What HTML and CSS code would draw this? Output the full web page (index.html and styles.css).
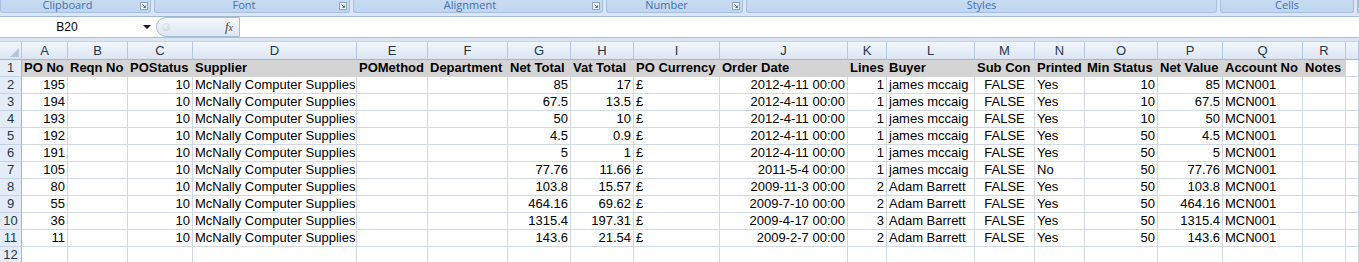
FILE: index.html
```html
<!DOCTYPE html>
<html lang="en">
<head>
    <meta charset="UTF-8">
    <meta name="viewport" content="width=device-width, initial-scale=1.0">
    <title>Purchase Orders - Microsoft Excel</title>
    <link rel="stylesheet" href="styles.css">
</head>
<body>
    <div class="toolbar">
        <!-- ribbon group captions -->
        <div class="ribbon">
            <div class="group g-clipboard">
                <span class="group-label">Clipboard</span>
                <svg class="launcher" width="8" height="8" viewBox="0 0 8 8"><rect x="0.5" y="0.5" width="7" height="7" fill="#eef3fa" stroke="#8ea3c0"/><path d="M2.5 2.5 L5.5 5.5 M5.5 3.5 V5.5 H3.5" stroke="#5b6f8c" fill="none"/></svg>
            </div>
            <div class="group g-font">
                <span class="group-label">Font</span>
                <svg class="launcher" width="8" height="8" viewBox="0 0 8 8"><rect x="0.5" y="0.5" width="7" height="7" fill="#eef3fa" stroke="#8ea3c0"/><path d="M2.5 2.5 L5.5 5.5 M5.5 3.5 V5.5 H3.5" stroke="#5b6f8c" fill="none"/></svg>
            </div>
            <div class="group g-alignment">
                <span class="group-label">Alignment</span>
                <svg class="launcher" width="8" height="8" viewBox="0 0 8 8"><rect x="0.5" y="0.5" width="7" height="7" fill="#eef3fa" stroke="#8ea3c0"/><path d="M2.5 2.5 L5.5 5.5 M5.5 3.5 V5.5 H3.5" stroke="#5b6f8c" fill="none"/></svg>
            </div>
            <div class="group g-number">
                <span class="group-label">Number</span>
                <svg class="launcher" width="8" height="8" viewBox="0 0 8 8"><rect x="0.5" y="0.5" width="7" height="7" fill="#eef3fa" stroke="#8ea3c0"/><path d="M2.5 2.5 L5.5 5.5 M5.5 3.5 V5.5 H3.5" stroke="#5b6f8c" fill="none"/></svg>
            </div>
            <div class="group g-styles">
                <span class="group-label">Styles</span>
            </div>
            <div class="group g-cells">
                <span class="group-label">Cells</span>
            </div>
            <div class="group g-editing"></div>
        </div>

        <!-- name box + formula bar -->
        <div class="formula-bar">
            <div class="name-box">
                <span class="cell-ref">B20</span>
                <span class="name-drop"></span>
            </div>
            <div class="fx-button">
                <span class="fx-knob"></span>
                <span class="fx-label">f<span class="fx-sub">x</span></span>
            </div>
            <div class="formula-input"></div>
        </div>
    </div>

    <div class="sheet">
        <div class="row col-heads">
            <div class="corner"><svg width="9" height="9" viewBox="0 0 9 9"><path d="M9 0 V9 H0 Z" fill="#b4c6dd"/></svg></div>
            <div class="ch">A</div><div class="ch">B</div><div class="ch">C</div><div class="ch">D</div>
            <div class="ch">E</div><div class="ch">F</div><div class="ch">G</div><div class="ch">H</div>
            <div class="ch">I</div><div class="ch">J</div><div class="ch">K</div><div class="ch">L</div>
            <div class="ch">M</div><div class="ch">N</div><div class="ch">O</div><div class="ch">P</div>
            <div class="ch">Q</div><div class="ch">R</div><div class="ch"></div>
        </div>

        <div class="row title-row">
            <div class="rh">1</div>
            <div class="c hd">PO No</div><div class="c hd">Reqn No</div><div class="c hd">POStatus</div><div class="c hd">Supplier</div>
            <div class="c hd">POMethod</div><div class="c hd">Department</div><div class="c hd">Net Total</div><div class="c hd">Vat Total</div>
            <div class="c hd">PO Currency</div><div class="c hd">Order Date</div><div class="c hd">Lines</div><div class="c hd">Buyer</div>
            <div class="c hd">Sub Con</div><div class="c hd">Printed</div><div class="c hd">Min Status</div><div class="c hd">Net Value</div>
            <div class="c hd">Account No</div><div class="c hd">Notes</div><div class="c"></div>
        </div>

        <div class="row">
            <div class="rh">2</div>
            <div class="c num">195</div><div class="c"></div><div class="c num">10</div><div class="c">McNally Computer Supplies</div>
            <div class="c"></div><div class="c"></div><div class="c num">85</div><div class="c num">17</div>
            <div class="c">£</div><div class="c num">2012-4-11 00:00</div><div class="c num">1</div><div class="c">james mccaig</div>
            <div class="c bool">FALSE</div><div class="c">Yes</div><div class="c num">10</div><div class="c num">85</div>
            <div class="c">MCN001</div><div class="c"></div><div class="c"></div>
        </div>
        <div class="row">
            <div class="rh">3</div>
            <div class="c num">194</div><div class="c"></div><div class="c num">10</div><div class="c">McNally Computer Supplies</div>
            <div class="c"></div><div class="c"></div><div class="c num">67.5</div><div class="c num">13.5</div>
            <div class="c">£</div><div class="c num">2012-4-11 00:00</div><div class="c num">1</div><div class="c">james mccaig</div>
            <div class="c bool">FALSE</div><div class="c">Yes</div><div class="c num">10</div><div class="c num">67.5</div>
            <div class="c">MCN001</div><div class="c"></div><div class="c"></div>
        </div>
        <div class="row">
            <div class="rh">4</div>
            <div class="c num">193</div><div class="c"></div><div class="c num">10</div><div class="c">McNally Computer Supplies</div>
            <div class="c"></div><div class="c"></div><div class="c num">50</div><div class="c num">10</div>
            <div class="c">£</div><div class="c num">2012-4-11 00:00</div><div class="c num">1</div><div class="c">james mccaig</div>
            <div class="c bool">FALSE</div><div class="c">Yes</div><div class="c num">10</div><div class="c num">50</div>
            <div class="c">MCN001</div><div class="c"></div><div class="c"></div>
        </div>
        <div class="row">
            <div class="rh">5</div>
            <div class="c num">192</div><div class="c"></div><div class="c num">10</div><div class="c">McNally Computer Supplies</div>
            <div class="c"></div><div class="c"></div><div class="c num">4.5</div><div class="c num">0.9</div>
            <div class="c">£</div><div class="c num">2012-4-11 00:00</div><div class="c num">1</div><div class="c">james mccaig</div>
            <div class="c bool">FALSE</div><div class="c">Yes</div><div class="c num">50</div><div class="c num">4.5</div>
            <div class="c">MCN001</div><div class="c"></div><div class="c"></div>
        </div>
        <div class="row">
            <div class="rh">6</div>
            <div class="c num">191</div><div class="c"></div><div class="c num">10</div><div class="c">McNally Computer Supplies</div>
            <div class="c"></div><div class="c"></div><div class="c num">5</div><div class="c num">1</div>
            <div class="c">£</div><div class="c num">2012-4-11 00:00</div><div class="c num">1</div><div class="c">james mccaig</div>
            <div class="c bool">FALSE</div><div class="c">Yes</div><div class="c num">50</div><div class="c num">5</div>
            <div class="c">MCN001</div><div class="c"></div><div class="c"></div>
        </div>
        <div class="row">
            <div class="rh">7</div>
            <div class="c num">105</div><div class="c"></div><div class="c num">10</div><div class="c">McNally Computer Supplies</div>
            <div class="c"></div><div class="c"></div><div class="c num">77.76</div><div class="c num">11.66</div>
            <div class="c">£</div><div class="c num">2011-5-4 00:00</div><div class="c num">1</div><div class="c">james mccaig</div>
            <div class="c bool">FALSE</div><div class="c">No</div><div class="c num">50</div><div class="c num">77.76</div>
            <div class="c">MCN001</div><div class="c"></div><div class="c"></div>
        </div>
        <div class="row">
            <div class="rh">8</div>
            <div class="c num">80</div><div class="c"></div><div class="c num">10</div><div class="c">McNally Computer Supplies</div>
            <div class="c"></div><div class="c"></div><div class="c num">103.8</div><div class="c num">15.57</div>
            <div class="c">£</div><div class="c num">2009-11-3 00:00</div><div class="c num">2</div><div class="c">Adam Barrett</div>
            <div class="c bool">FALSE</div><div class="c">Yes</div><div class="c num">50</div><div class="c num">103.8</div>
            <div class="c">MCN001</div><div class="c"></div><div class="c"></div>
        </div>
        <div class="row">
            <div class="rh">9</div>
            <div class="c num">55</div><div class="c"></div><div class="c num">10</div><div class="c">McNally Computer Supplies</div>
            <div class="c"></div><div class="c"></div><div class="c num">464.16</div><div class="c num">69.62</div>
            <div class="c">£</div><div class="c num">2009-7-10 00:00</div><div class="c num">2</div><div class="c">Adam Barrett</div>
            <div class="c bool">FALSE</div><div class="c">Yes</div><div class="c num">50</div><div class="c num">464.16</div>
            <div class="c">MCN001</div><div class="c"></div><div class="c"></div>
        </div>
        <div class="row">
            <div class="rh">10</div>
            <div class="c num">36</div><div class="c"></div><div class="c num">10</div><div class="c">McNally Computer Supplies</div>
            <div class="c"></div><div class="c"></div><div class="c num">1315.4</div><div class="c num">197.31</div>
            <div class="c">£</div><div class="c num">2009-4-17 00:00</div><div class="c num">3</div><div class="c">Adam Barrett</div>
            <div class="c bool">FALSE</div><div class="c">Yes</div><div class="c num">50</div><div class="c num">1315.4</div>
            <div class="c">MCN001</div><div class="c"></div><div class="c"></div>
        </div>
        <div class="row">
            <div class="rh">11</div>
            <div class="c num">11</div><div class="c"></div><div class="c num">10</div><div class="c">McNally Computer Supplies</div>
            <div class="c"></div><div class="c"></div><div class="c num">143.6</div><div class="c num">21.54</div>
            <div class="c">£</div><div class="c num">2009-2-7 00:00</div><div class="c num">2</div><div class="c">Adam Barrett</div>
            <div class="c bool">FALSE</div><div class="c">Yes</div><div class="c num">50</div><div class="c num">143.6</div>
            <div class="c">MCN001</div><div class="c"></div><div class="c"></div>
        </div>
        <div class="row">
            <div class="rh">12</div>
            <div class="c"></div><div class="c"></div><div class="c"></div><div class="c"></div>
            <div class="c"></div><div class="c"></div><div class="c"></div><div class="c"></div>
            <div class="c"></div><div class="c"></div><div class="c"></div><div class="c"></div>
            <div class="c"></div><div class="c"></div><div class="c"></div><div class="c"></div>
            <div class="c"></div><div class="c"></div><div class="c"></div>
        </div>
    </div>
</body>
</html>
```

FILE: styles.css
```css
body {
    margin: 0;
    width: 1359px;
    overflow: hidden;
    background: #fff;
    font-family: "Liberation Sans", Arial, sans-serif;
}

/* ---------- ribbon + formula bar ---------- */
.toolbar {
    background: #dbe6f4;
    padding-bottom: 3px;
}

.ribbon {
    display: flex;
    gap: 3px;
    height: 13px;
}

.group {
    display: flex;
    align-items: flex-start;
    box-sizing: border-box;
    height: 13px;
    background: linear-gradient(#c7dbf2, #c0d5ef);
    border: 1px solid #a6bfe0;
    border-top: none;
    border-radius: 0 0 3px 3px;
}

.g-clipboard { width: 151px; }
.g-font      { width: 196px; }
.g-alignment { width: 250px; }
.g-number    { width: 137px; }
.g-styles    { width: 471px; }
.g-cells     { width: 134px; }
.g-editing   { flex: 1; }

.group-label {
    flex: 1;
    text-align: center;
    font-family: "Open Sans", "Noto Sans", sans-serif;
    font-size: 11px;
    line-height: 10px;
    color: #4470ad;
}

.launcher {
    margin: 2px 2px 0 6px;
}

.formula-bar {
    display: flex;
    box-sizing: border-box;
    height: 22px;
    margin-top: 3px;
    background: #fff;
    border-top: 1px solid #9fb6d7;
    border-bottom: 1px solid #a9bedb;
}

.name-box {
    display: flex;
    align-items: center;
    width: 156px;
}

.cell-ref {
    width: 134px;
    text-align: center;
    font-size: 12px;
    color: #000;
}

.name-drop {
    margin-left: 9px;
    width: 0;
    height: 0;
    border-left: 4px solid transparent;
    border-right: 4px solid transparent;
    border-top: 4px solid #111;
}

.fx-button {
    display: flex;
    align-items: center;
    justify-content: space-between;
    box-sizing: border-box;
    width: 84px;
    height: 20px;
    padding: 0 6px 0 5px;
    background: linear-gradient(#f7f9fc, #dde6f2);
    border: 1px solid #a9bcd6;
    border-radius: 10px 0 0 10px;
}

.fx-knob {
    width: 8px;
    height: 8px;
    border-radius: 50%;
    background: radial-gradient(circle at 40% 40%, #f4f6f9, #c3ccd8);
}

.fx-label {
    font-family: "Liberation Serif", "DejaVu Serif", serif;
    font-style: italic;
    font-size: 13px;
    color: #444;
}

.fx-sub {
    font-size: 10px;
}

.formula-input {
    flex: 1;
}

/* ---------- worksheet grid ---------- */
.row {
    display: grid;
    grid-template-columns: 22px 46px 60px 65px 164px 71px 80px 63px 63px 86px 128px 39px 88px 60px 50px 73px 65px 80px 43px 1fr;
    height: 17px;
}

.row > div {
    box-sizing: border-box;
    white-space: nowrap;
    font-size: 13px;
    line-height: 16px;
}

.col-heads {
    height: 19px;
}

.corner,
.ch {
    background: linear-gradient(#f3f7fc, #dbe5f2);
    border-right: 1px solid #b6c8df;
    border-bottom: 1px solid #9eb6ce;
    border-top: 1px solid #c4d4e8;
}

.corner {
    display: flex;
    align-items: flex-end;
    justify-content: flex-end;
    padding: 0 2px 2px 0;
}

.ch {
    text-align: center;
    color: #27364a;
    line-height: 17px !important;
}

.rh {
    text-align: center;
    color: #27364a;
    background: #e4ecf7;
    border-right: 1px solid #9eb6ce;
    border-bottom: 1px solid #c5d3e6;
}

.c {
    padding: 0 2px;
    color: #000;
    border-right: 1px solid #d0d7e5;
    border-bottom: 1px solid #d0d7e5;
}

.num  { text-align: right; }
.bool { text-align: center; }

.hd {
    font-weight: bold;
    background: #d4d4d4;
    border-color: #d4d4d4;
}
```
